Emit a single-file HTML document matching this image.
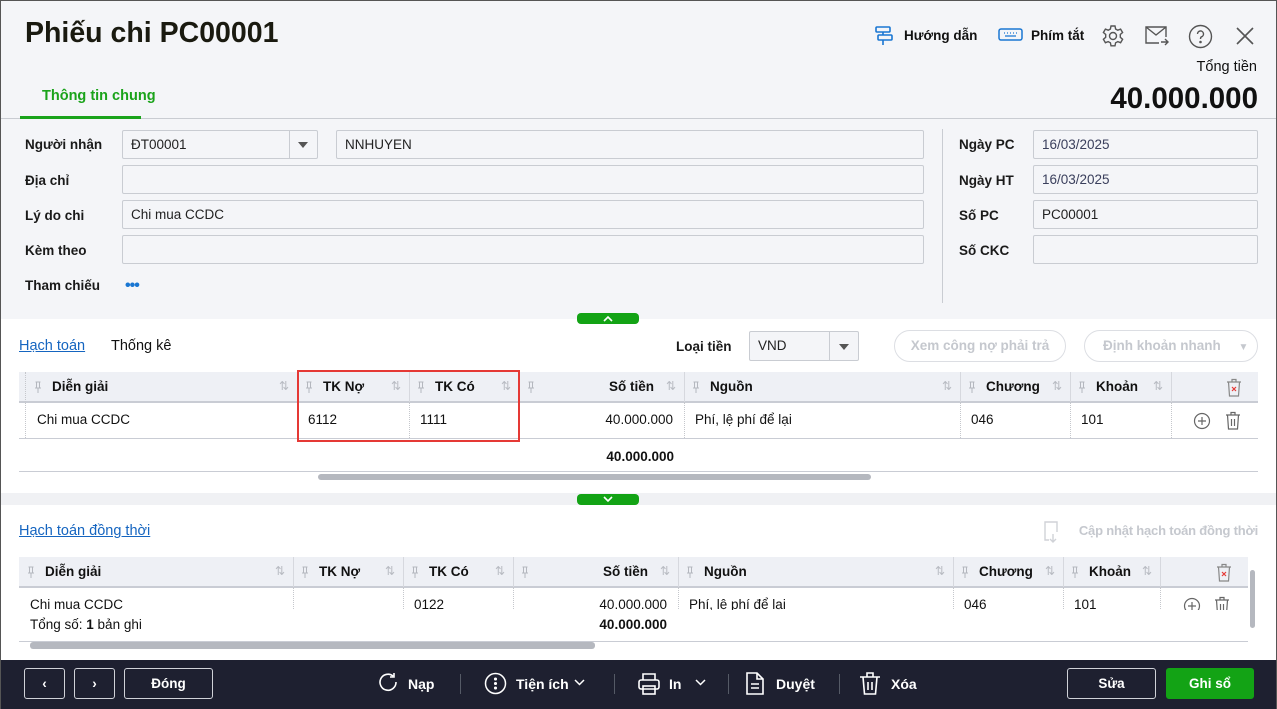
<!DOCTYPE html>
<html><head><meta charset="utf-8">
<style>
*{box-sizing:border-box;margin:0;padding:0}
body{width:1277px;height:709px;overflow:hidden;font-family:"Liberation Sans",sans-serif;font-size:14px;color:#111;background:#fff;position:relative}
.a{position:absolute}
.frame{left:0;top:0;width:1277px;height:709px;border:1px solid #555;border-bottom:none;pointer-events:none;z-index:10}
.lbl{font-weight:bold;font-size:13.5px;color:#1a1a1a}
.inp{background:#f4f5f8;border:1px solid #c9ccd2;border-radius:2px;height:29px;padding:0 8px;line-height:27px;font-size:13.5px;color:#222}
.th{height:30px;background:#eef0f5;border-bottom:1px solid #c9ccd4}
.td{position:absolute;font-size:13.5px}
.vd{position:absolute;width:0;border-left:1px dotted #c5c7cc}
.fb{position:absolute;top:668px;height:31px;border:1px solid #d0d2d8;border-radius:3px;color:#fff;font-weight:bold;font-size:13.5px;text-align:center;line-height:29px}
.ft{position:absolute;top:675px;color:#fff;font-weight:bold;font-size:14px;line-height:18px}
.sep{position:absolute;top:674px;width:1px;height:20px;background:#555a66}
</style></head><body>
<div class="a frame"></div>
<div class="a" style="left:0;top:0;width:1277px;height:319px;background:#f4f5f8"></div>
<div class="a" style="left:25px;top:17px;font-size:28.5px;font-weight:bold;color:#1a1a10">Phiếu chi PC00001</div>
<svg class="a" style="left:874px;top:25px" width="20" height="22" viewBox="0 0 20 22" fill="none" stroke="#1976d2" stroke-width="1.6"><rect x="2" y="2" width="14" height="5" rx="1"/><rect x="4" y="10" width="14" height="5" rx="1"/><path d="M9 7v3M9 15v5"/></svg>
<div class="a" style="left:904px;top:28px;font-size:13.5px;font-weight:bold">Hướng dẫn</div>
<svg class="a" style="left:998px;top:28px" width="25" height="14" viewBox="0 0 25 14" fill="none" stroke="#1976d2" stroke-width="1.5"><rect x="1" y="1" width="23" height="11" rx="2"/><path d="M6 5h1M9 5h1M12 5h1M15 5h1M18 5h1M7 8h11" stroke-width="1.2"/></svg>
<div class="a" style="left:1031px;top:28px;font-size:13.5px;font-weight:bold">Phím tắt</div>
<svg class="a" style="left:1101px;top:24px" width="24" height="24" viewBox="0 0 24 24" fill="none" stroke="#555" stroke-width="1.4"><circle cx="12" cy="12" r="3.5"/><path d="M10 2h4l.6 3 2.2 1.2 2.8-1.1 2 3.4-2.3 2v2.8l2.3 2-2 3.4-2.8-1.1-2.2 1.2-.6 3h-4l-.6-3-2.2-1.2-2.8 1.1-2-3.4 2.3-2v-2.8l-2.3-2 2-3.4 2.8 1.1L9.4 5z"/></svg>
<svg class="a" style="left:1144px;top:25px" width="26" height="22" viewBox="0 0 26 22" fill="none" stroke="#555" stroke-width="1.4"><path d="M22 12V2H2v16h13"/><path d="M2 2l10 8 10-8"/><path d="M17 17h7M21 14l3 3-3 3"/></svg>
<svg class="a" style="left:1188px;top:24px" width="25" height="25" viewBox="0 0 25 25" fill="none" stroke="#555" stroke-width="1.4"><circle cx="12.5" cy="12.5" r="11"/><path d="M9.5 10a3 3 0 1 1 4 2.8c-1 .4-1 1.2-1 2.2"/><circle cx="12.5" cy="18" r=".6" fill="#555"/></svg>
<svg class="a" style="left:1235px;top:26px" width="20" height="20" viewBox="0 0 20 20" stroke="#555" stroke-width="1.6"><path d="M2 2l16 16M18 2L2 18"/></svg>
<div class="a" style="left:1150px;top:59px;width:107px;text-align:right;font-size:14.5px">Tổng tiền</div>
<div class="a" style="left:1040px;top:82px;width:218px;text-align:right;font-size:29.5px;font-weight:bold">40.000.000</div>
<div class="a" style="left:42px;top:88px;color:#1aa31a;font-weight:bold;font-size:14.5px">Thông tin chung</div>
<div class="a" style="left:0;top:118px;width:1277px;height:1px;background:#c9ccd2"></div>
<div class="a" style="left:20px;top:116px;width:121px;height:3px;background:#1aa31a"></div>
<div class="a lbl" style="left:25px;top:137px">Người nhận</div>
<div class="a lbl" style="left:25px;top:173px">Địa chỉ</div>
<div class="a lbl" style="left:25px;top:208px">Lý do chi</div>
<div class="a lbl" style="left:25px;top:243px">Kèm theo</div>
<div class="a lbl" style="left:25px;top:278px">Tham chiếu</div>
<div class="a" style="left:125px;top:277px;color:#1976d2;font-size:16px;font-weight:bold;letter-spacing:-1px">•••</div>
<div class="a inp" style="left:122px;top:130px;width:196px">ĐT00001</div>
<div class="a" style="left:289px;top:131px;width:1px;height:27px;background:#c9ccd2"></div>
<div class="a" style="left:298px;top:142px;width:0;height:0;border-left:5px solid transparent;border-right:5px solid transparent;border-top:6px solid #555"></div>
<div class="a inp" style="left:336px;top:130px;width:588px">NNHUYEN</div>
<div class="a inp" style="left:122px;top:165px;width:802px"></div>
<div class="a inp" style="left:122px;top:200px;width:802px">Chi mua CCDC</div>
<div class="a inp" style="left:122px;top:235px;width:802px"></div>
<div class="a" style="left:942px;top:129px;width:1px;height:174px;background:#c9ccd2"></div>
<div class="a lbl" style="left:959px;top:137px">Ngày PC</div>
<div class="a lbl" style="left:959px;top:173px">Ngày HT</div>
<div class="a lbl" style="left:959px;top:208px">Số PC</div>
<div class="a lbl" style="left:959px;top:243px">Số CKC</div>
<div class="a inp" style="left:1033px;top:130px;width:225px;color:#3a3f5c">16/03/2025</div>
<div class="a inp" style="left:1033px;top:165px;width:225px;color:#3a3f5c">16/03/2025</div>
<div class="a inp" style="left:1033px;top:200px;width:225px">PC00001</div>
<div class="a inp" style="left:1033px;top:235px;width:225px"></div>
<div class="a" style="left:577px;top:313px;width:62px;height:11px;background:#13a315;border-radius:4px"></div>
<svg class="a" style="left:601px;top:314px" width="14" height="9" viewBox="0 0 14 9" fill="none" stroke="#fff" stroke-width="1.6"><path d="M3 7l4-4 4 4"/></svg>
<div class="a" style="left:19px;top:338px;color:#1565c0;font-size:14.5px;text-decoration:underline">Hạch toán</div>
<div class="a" style="left:111px;top:338px;font-size:14.5px">Thống kê</div>
<div class="a lbl" style="left:676px;top:339px">Loại tiền</div>
<div class="a inp" style="left:749px;top:331px;width:110px;height:30px;line-height:28px">VND</div>
<div class="a" style="left:829px;top:332px;width:1px;height:28px;background:#c9ccd2"></div>
<div class="a" style="left:839px;top:344px;width:0;height:0;border-left:5px solid transparent;border-right:5px solid transparent;border-top:6px solid #555"></div>
<div class="a" style="left:894px;top:330px;width:172px;height:32px;border:1px solid #dcdee3;border-radius:16px;text-align:center;line-height:30px;color:#c5c8ce;font-weight:bold;font-size:13.5px">Xem công nợ phải trả</div>
<div class="a" style="left:1084px;top:330px;width:174px;height:32px;border:1px solid #dcdee3;border-radius:16px;line-height:30px;color:#c5c8ce;font-weight:bold;font-size:13.5px;padding-left:18px">Định khoản nhanh <span style="font-size:10px;margin-left:14px">▼</span></div>
<div class="a th" style="left:19px;top:372px;width:1239px"></div>
<div class="a" style="left:19px;top:402px;width:1239px;height:1px;background:#c9ccd4"></div>
<div class="a" style="left:19px;top:438px;width:1239px;height:1px;background:#c9ccd4"></div>
<div class="a" style="left:19px;top:471px;width:1239px;height:1px;background:#c9ccd4"></div>
<div class="a" style="left:318px;top:474px;width:553px;height:6px;background:#b5b8bf;border-radius:3px"></div>
<div class="a" style="left:25px;top:372px;width:1px;height:66px;border-left:1px dotted #c5c7cc"></div>
<div id="g1"></div>
<div class="a" style="left:297px;top:370px;width:223px;height:72px;border:2px solid #e53935"></div>
<div class="a" style="left:0;top:493px;width:1277px;height:12px;background:#f0f1f4"></div>
<div class="a" style="left:577px;top:494px;width:62px;height:11px;background:#13a315;border-radius:4px"></div>
<svg class="a" style="left:601px;top:495px" width="14" height="9" viewBox="0 0 14 9" fill="none" stroke="#fff" stroke-width="1.6"><path d="M3 2l4 4 4-4"/></svg>
<div class="a" style="left:19px;top:523px;color:#1565c0;font-size:14.5px;text-decoration:underline">Hạch toán đồng thời</div>
<svg class="a" style="left:1042px;top:520px" width="20" height="24" viewBox="0 0 20 24" fill="none" stroke="#d0d2d7" stroke-width="1.4"><path d="M7 20H3V2h12v10"/><path d="M11 14v8M8 19l3 3 3-3"/></svg>
<div class="a" style="left:1060px;top:523px;width:198px;text-align:right;color:#c5c8ce;font-weight:bold;font-size:13px;letter-spacing:-0.2px">Cập nhật hạch toán đồng thời</div>
<div class="a th" style="left:19px;top:557px;width:1229px"></div>
<div class="a" style="left:19px;top:587px;width:1229px;height:1px;background:#c9ccd4"></div>
<div class="a" style="left:19px;top:641px;width:1229px;height:1px;background:#c9ccd4"></div>
<div class="a" style="left:30px;top:642px;width:565px;height:7px;background:#b5b8bf;border-radius:3px"></div>
<div class="a" style="left:1250px;top:570px;width:5px;height:58px;background:#b5b8bf;border-radius:3px"></div>
<div id="g2"></div>
<div class="a" style="left:30px;top:617px;font-size:13.5px">Tổng số: <b>1</b> bản ghi</div>
<div class="a" style="left:560px;top:617px;width:107px;text-align:right;font-weight:bold;font-size:13.5px">40.000.000</div>
<div class="a" style="left:0;top:660px;width:1277px;height:49px;background:#1e2030"></div>
<div class="fb" style="left:24px;width:41px">‹</div>
<div class="fb" style="left:74px;width:41px">›</div>
<div class="fb" style="left:124px;width:89px">Đóng</div>
<svg class="a" style="left:377px;top:672px" width="22" height="22" viewBox="0 0 22 22" fill="none" stroke="#fff" stroke-width="1.6"><path d="M19 10a8 8 0 1 1-3-6M17 1v4h-4"/></svg>
<div class="ft" style="left:408px">Nạp</div>
<div class="sep" style="left:460px"></div>
<svg class="a" style="left:484px;top:672px" width="23" height="23" viewBox="0 0 23 23" fill="none" stroke="#fff" stroke-width="1.5"><circle cx="11.5" cy="11.5" r="10"/><circle cx="11.5" cy="7" r=".8" fill="#fff"/><circle cx="11.5" cy="11.5" r=".8" fill="#fff"/><circle cx="11.5" cy="16" r=".8" fill="#fff"/></svg>
<div class="ft" style="left:516px">Tiện ích</div>
<svg class="a" style="left:574px;top:679px" width="11" height="7" viewBox="0 0 11 7" fill="none" stroke="#fff" stroke-width="1.5"><path d="M1 1l4.5 4.5L10 1"/></svg>
<div class="sep" style="left:614px"></div>
<svg class="a" style="left:637px;top:672px" width="24" height="24" viewBox="0 0 24 24" fill="none" stroke="#fff" stroke-width="1.6"><path d="M6 8V2h12v6"/><rect x="2" y="8" width="20" height="9" rx="2"/><rect x="6" y="14" width="12" height="8"/></svg>
<div class="ft" style="left:669px">In</div>
<svg class="a" style="left:695px;top:679px" width="11" height="7" viewBox="0 0 11 7" fill="none" stroke="#fff" stroke-width="1.5"><path d="M1 1l4.5 4.5L10 1"/></svg>
<div class="sep" style="left:728px"></div>
<svg class="a" style="left:745px;top:671px" width="20" height="25" viewBox="0 0 20 25" fill="none" stroke="#fff" stroke-width="1.6"><path d="M2 2h10l6 6v15H2z"/><path d="M12 2v6h6M6 13h8M6 17h8"/></svg>
<div class="ft" style="left:776px">Duyệt</div>
<div class="sep" style="left:839px"></div>
<svg class="a" style="left:859px;top:671px" width="22" height="25" viewBox="0 0 22 25" fill="none" stroke="#fff" stroke-width="1.6"><path d="M1 6h20M8 6V2h6v4M4 6l1.5 17h11L18 6M9 11v8M13 11v8"/></svg>
<div class="ft" style="left:891px">Xóa</div>
<div class="fb" style="left:1067px;width:89px">Sửa</div>
<div class="fb" style="left:1166px;width:88px;background:#13a315;border-color:#13a315">Ghi sổ</div>
<script>
function pin(x,y){return '<svg class="a" style="left:'+x+'px;top:'+y+'px" width="8" height="13" viewBox="0 0 8 13" fill="none" stroke="#b4b7be" stroke-width="1"><path d="M1.5 1h5M2.5 1v6h3V1M1 7h6M4 7v5"/></svg>';}
function grid(id,top,cols,rowY,rowH,row,clip){
 var h='';
 cols.forEach(function(c,i){
  var x=c[0],w=c[1];
  if(i<cols.length-1){
   h+='<div class="a" style="left:'+(x+w)+'px;top:'+top+'px;width:1px;height:30px;background:#d6d8de"></div>';
   h+='<div class="vd" style="left:'+(x+w)+'px;top:'+(top+30)+'px;height:'+rowH+'px"></div>';
  }
  if(c[2]){
   h+=pin(x+8,top+9);
   if(c[3]) h+='<div class="a" style="left:'+x+'px;top:'+(top+7)+'px;width:'+(w-30)+'px;text-align:right;font-weight:bold;font-size:13.5px">'+c[2]+'</div>';
   else h+='<div class="a" style="left:'+(x+26)+'px;top:'+(top+7)+'px;font-weight:bold;font-size:13.5px">'+c[2]+'</div>';
   h+='<div class="a" style="left:'+(x+w-18)+'px;top:'+(top+7)+'px;color:#b9bcc3;font-size:12px">⇅</div>';
  }
  var t=row[i];
  if(t){
   if(c[3]) h+='<div class="td" style="left:'+x+'px;top:'+rowY+'px;width:'+(w-11)+'px;text-align:right">'+t+'</div>';
   else h+='<div class="td" style="left:'+(x+11)+'px;top:'+rowY+'px">'+t+'</div>';
  }
 });
 document.getElementById(id).outerHTML=clip?'<div class="a" style="left:0;top:0;width:1277px;height:610px;overflow:hidden">'+h+'</div>':h;
}
grid('g1',372,[[26,271,'Diễn giải'],[297,112,'TK Nợ'],[409,110,'TK Có'],[519,165,'Số tiền',1],[684,276,'Nguồn'],[960,110,'Chương'],[1070,101,'Khoản'],[1171,87,'']],412,36,['Chi mua CCDC','6112','1111','40.000.000','Phí, lệ phí để lại','046','101','']);
grid('g2',557,[[19,274,'Diễn giải'],[293,110,'TK Nợ'],[403,110,'TK Có'],[513,165,'Số tiền',1],[678,275,'Nguồn'],[953,110,'Chương'],[1063,97,'Khoản'],[1160,88,'']],597,22,['Chi mua CCDC','','0122','40.000.000','Phí, lệ phí để lại','046','101',''],1);
</script>
<div class="a" style="left:520px;top:449px;width:154px;text-align:right;font-weight:bold;font-size:13.5px">40.000.000</div>
<svg class="a" style="left:1226px;top:378px" width="16" height="19" viewBox="0 0 16 19" fill="none" stroke="#888" stroke-width="1.2"><path d="M1 4h14M6 4V1.5h4V4M2.5 4l1 14h9l1-14"/><path d="M6 9l4 4M10 9l-4 4" stroke="#e53935"/></svg>
<svg class="a" style="left:1193px;top:412px" width="18" height="18" viewBox="0 0 18 18" fill="none" stroke="#666" stroke-width="1.2"><circle cx="9" cy="9" r="7.5"/><path d="M9 5v8M5 9h8"/></svg>
<svg class="a" style="left:1225px;top:411px" width="16" height="19" viewBox="0 0 16 19" fill="none" stroke="#666" stroke-width="1.2"><path d="M1 4h14M6 4V1.5h4V4M2.5 4l1 14h9l1-14M6.5 8v7M9.5 8v7"/></svg>
<svg class="a" style="left:1216px;top:563px" width="16" height="19" viewBox="0 0 16 19" fill="none" stroke="#888" stroke-width="1.2"><path d="M1 4h14M6 4V1.5h4V4M2.5 4l1 14h9l1-14"/><path d="M6 9l4 4M10 9l-4 4" stroke="#e53935"/></svg>
<div class="a" style="left:1180px;top:596px;width:70px;height:14px;overflow:hidden">
<svg class="a" style="left:3px;top:1px" width="18" height="18" viewBox="0 0 18 18" fill="none" stroke="#666" stroke-width="1.2"><circle cx="9" cy="9" r="7.5"/><path d="M9 5v8M5 9h8"/></svg>
<svg class="a" style="left:34px;top:0" width="16" height="19" viewBox="0 0 16 19" fill="none" stroke="#666" stroke-width="1.2"><path d="M1 4h14M6 4V1.5h4V4M2.5 4l1 14h9l1-14M6.5 8v7M9.5 8v7"/></svg>
</div>
</body></html>
